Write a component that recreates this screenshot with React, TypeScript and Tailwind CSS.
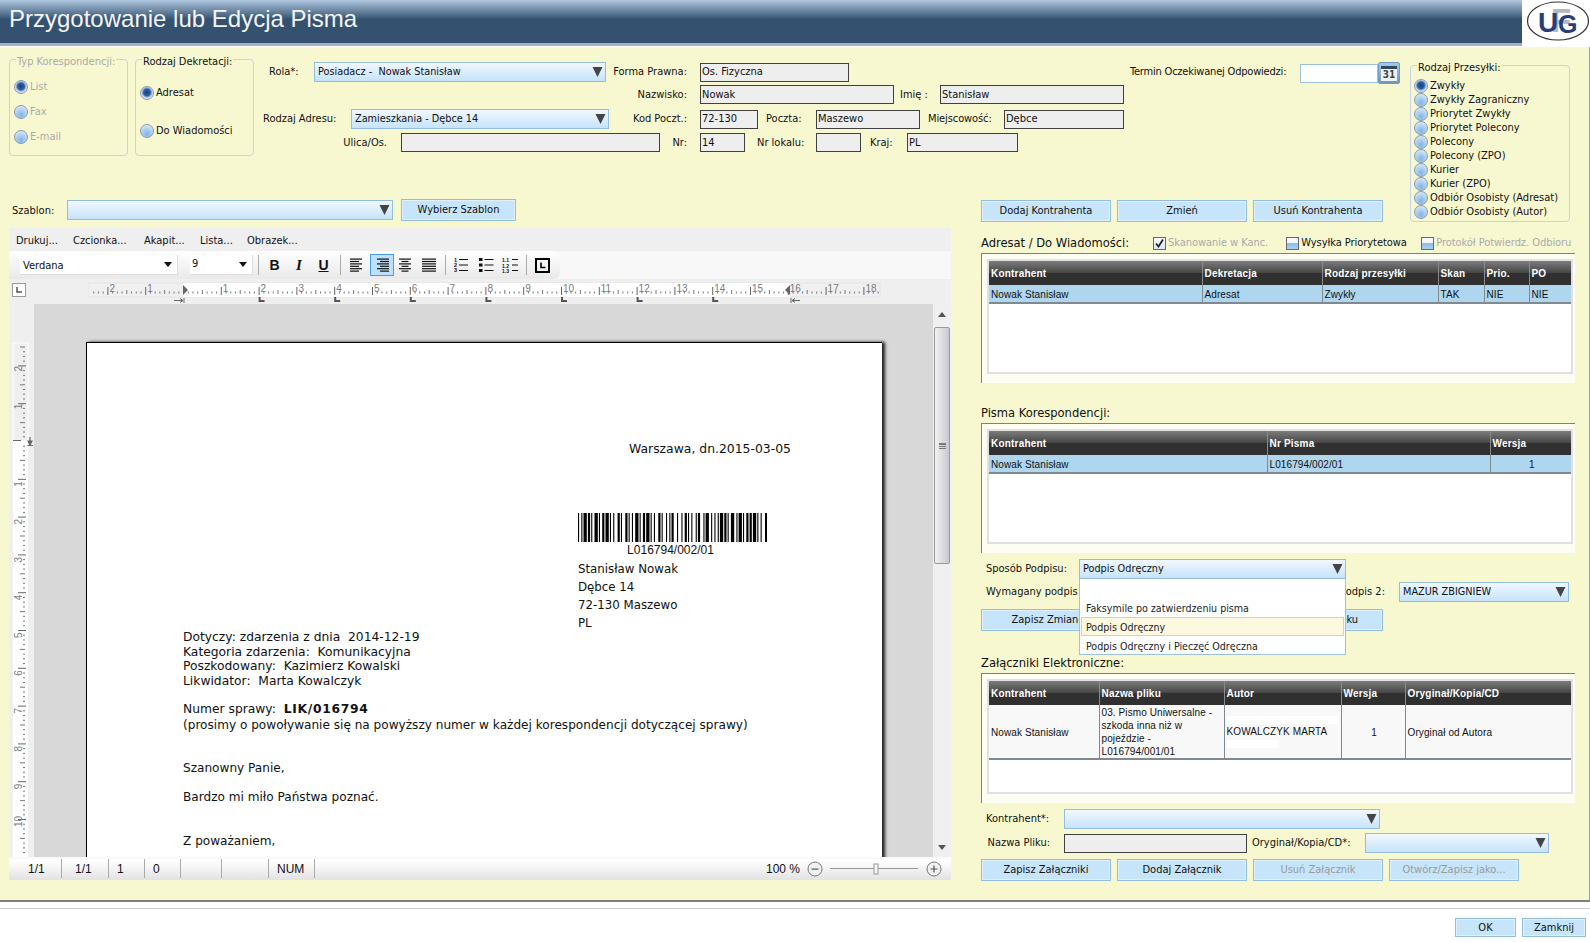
import React from 'react';

const arrowDown = (
  <svg width="11" height="12" viewBox="0 0 11 12" className="shrink-0">
    <polygon points="0.5,1 10.5,1 5.5,11" fill="#444" />
  </svg>
);

function Radio({ checked, disabled, label }: { checked?: boolean; disabled?: boolean; label: string }) {
  return (
    <div className={`flex items-center h-[14px] gap-[2px] text-[11px] whitespace-nowrap ${disabled ? 'text-[#aaaaaa]' : 'text-[#111]'}`}>
      <span
        className={`w-[14px] h-[14px] rounded-full border border-[#8a9aa8] shrink-0 flex items-center justify-center ${
          checked
            ? 'bg-[radial-gradient(circle_at_50%_45%,#1c3f78_0%,#2f5fa8_38%,#c9ddf2_62%,#e8f0f8_100%)]'
            : 'bg-[radial-gradient(circle_at_50%_75%,#7fb4e8_0%,#b8d6f2_55%,#e8f2fa_100%)]'
        }`}
      />
      <span className="pt-[1px]">{label}</span>
    </div>
  );
}

function Group({ legend, disabled, className, children }: { legend: string; disabled?: boolean; className: string; children: React.ReactNode }) {
  return (
    <div className={`relative border border-[#c4d4e4] rounded-[4px] shrink-0 ${className}`}>
      <span className={`absolute -top-[5px] left-[6px] px-[1px] text-[11px] leading-[14px] bg-[#f8f8d0] whitespace-nowrap ${disabled ? 'text-[#aaaaaa]' : 'text-[#111]'}`}>
        {legend}
      </span>
      {children}
    </div>
  );
}

function Select({ value, className }: { value?: string; className: string }) {
  return (
    <div className={`h-[20px] border border-[#94bcdc] bg-[linear-gradient(#f0f8ff,#c6e3fa)] flex items-center justify-between pl-[3px] pr-[2px] text-[10.8px] text-[#111] shrink-0 ${className}`}>
      <span className="whitespace-pre pt-[1px]">{value}</span>
      {arrowDown}
    </div>
  );
}

function Field({ value, className }: { value?: string; className: string }) {
  return (
    <div className={`h-[19px] border border-[#404040] bg-[#eeeeee] flex items-center pl-[1px] pt-[1px] text-[11px] text-[#111] shrink-0 whitespace-nowrap ${className}`}>
      {value}
    </div>
  );
}

function Btn({ label, disabled, className }: { label?: string; disabled?: boolean; className?: string }) {
  return (
    <button className={`h-[22px] border border-[#94bcdc] shadow-[inset_0_0_0_1px_#dff0fc] bg-[#c6e5fa] text-[11px] pt-[1px] shrink-0 whitespace-nowrap ${disabled ? 'text-[#9a9a9a]' : 'text-[#111]'} ${className ?? 'w-[130px]'}`}>
      {label}
    </button>
  );
}

function Lbl({ text, className }: { text: string; className: string }) {
  return <div className={`text-[11px] text-[#111] pt-[1px] shrink-0 whitespace-nowrap ${className}`}>{text}</div>;
}

function Check({ checked, blue, label, disabled }: { checked?: boolean; blue?: boolean; label: string; disabled?: boolean }) {
  return (
    <div className={`flex items-center gap-[2px] text-[11px] tracking-[-0.05px] whitespace-nowrap ${disabled ? 'text-[#aaaaaa]' : 'text-[#111]'}`}>
      <span className={`w-[13px] h-[13px] border border-[#667] shrink-0 flex items-center justify-center ${blue ? 'bg-[linear-gradient(#f4f8fc_45%,#8dbde8_50%,#a8d0f0)]' : 'bg-[linear-gradient(#ffffff,#d6e6f4)]'}`}>
        {checked && (
          <svg width="11" height="11" viewBox="0 0 11 11">
            <path d="M2 5.5 L4.5 8.5 L9 1.5" stroke="#223" strokeWidth="1.8" fill="none" />
          </svg>
        )}
      </span>
      <span>{label}</span>
    </div>
  );
}

const thCls = "h-[24px] border-r border-[#8a8a8a] last:border-r-0 bg-[linear-gradient(#7c7c7c,#454545_50%,#303030_50%)] text-white text-[10px] font-bold text-left pl-[2px] pt-[1px] tracking-[0.2px] font-['Liberation_Sans',sans-serif]";
const tdCls = "border-r border-b-2 border-b-[#808890] border-r-[#808890] last:border-r-0 text-[10px] text-[#111] pl-[2px] pt-[1px] tracking-[0.1px] align-middle font-['Liberation_Sans',sans-serif]";

function Panel({ children }: { children: React.ReactNode }) {
  return (
    <div className="h-[130px] border-t border-l border-[#808080] bg-[#fdfdf4] pt-[5px] pl-[5px] w-[594px]">
      <div className="w-[586px] h-[115px] border-2 border-[#e0e0e0] bg-white">{children}</div>
    </div>
  );
}

// horizontal ruler: 88..880 of the page, origin at 183
function HRuler() {
  const cm = 37.8;
  const ox = 95;
  const ticks: React.ReactNode[] = [];
  for (let i = -20; i < 150; i++) {
    const x = ox + (i * cm) / 8;
    if (x < 1 || x > 791) continue;
    if (i % 8 === 0) continue;
    ticks.push(<rect key={i} x={x} y={i % 4 === 0 ? 11 : 12.5} width="1" height={i % 4 === 0 ? 4 : 2} fill="#777" />);
  }
  const nums = [-2, -1, 1, 2, 3, 4, 5, 6, 7, 8, 9, 10, 11, 12, 13, 14, 15, 16, 17, 18];
  const stops = [2, 4, 6, 8, 10, 12, 14];
  return (
    <svg width="800" height="25" viewBox="0 0 800 25" className="shrink-0">
      <rect x="0" y="4" width="792" height="14" fill="#f0f0f0" stroke="#e4e4e4" />
      <rect x="95" y="4" width="607" height="14" fill="#ffffff" />
      {ticks}
      {nums.map((n) => (
        <g key={n}>
          <rect x={ox + n * cm} y="8" width="1" height="8" fill="#666" />
          <text x={ox + n * cm + 2} y="12.5" fontSize="10" fontFamily="Liberation Sans, sans-serif" fill="#7a7a80">
            {Math.abs(n)}
          </text>
        </g>
      ))}
      {stops.map((n) => (
        <path key={n} d={`M${ox + n * cm + 1} 18 V22 H${ox + n * cm + 6}`} stroke="#555" strokeWidth="2" fill="none" />
      ))}
      <polygon points="95,6 100,11 95,16" fill="#666" />
      <path d="M86 21.5 H95 M92 19.5 L95 21.5 L92 23.5 M96 19 V24" stroke="#666" strokeWidth="1" fill="none" />
      <polygon points="702,6 697,11 702,16" fill="#666" />
      <path d="M703 19 V24 M704 21.5 H712 M707 19.5 L704 21.5 L707 23.5" stroke="#666" strokeWidth="1" fill="none" />
    </svg>
  );
}

// vertical ruler: column 9..34, starts at y 304, origin at y 441
function VRuler() {
  const cm = 37.8;
  const oy = 137;
  const ticks: React.ReactNode[] = [];
  for (let i = -20; i < 100; i++) {
    const y = oy + (i * cm) / 8;
    if (y < 40 || y > 553) continue;
    if (i % 8 === 0) continue;
    ticks.push(<rect key={i} x={i % 4 === 0 ? 11 : 14} y={y} width={i % 4 === 0 ? 5 : 2} height="1" fill="#777" />);
  }
  const nums = [-2, -1, 1, 2, 3, 4, 5, 6, 7, 8, 9, 10];
  return (
    <svg width="25" height="553" viewBox="0 0 25 553" className="shrink-0">
      <rect x="4" y="39" width="15" height="514" fill="#ffffff" />
      <rect x="4" y="39" width="15" height="98" fill="#efefef" stroke="#ffffff" />
      {ticks}
      {nums.map((n) => {
        const y = oy + n * cm;
        return (
          <g key={n}>
            <rect x="9" y={y} width="8" height="1" fill="#666" />
            <text
              x="0"
              y="0"
              fontSize="10"
              fontFamily="Liberation Sans, sans-serif"
              fill="#7a7a80"
              transform={`translate(12.5 ${y + (n < 0 ? 6 : 8)}) rotate(-90)`}
            >
              {Math.abs(n)}
            </text>
          </g>
        );
      })}
      <rect x="4" y="136" width="8" height="1" fill="#666" />
      <path d="M21 133 V140 M19 137 L21 141 L23 137 Z M18.5 141.5 H24" stroke="#666" strokeWidth="1.2" fill="#666" />
    </svg>
  );
}

const barPattern = '1211312112311221311213211321121231122131121321131211231312211213112311321212113121123211311221213112132113122112311213211231';

function Barcode() {
  let x = 0;
  const bars: React.ReactNode[] = [];
  for (let i = 0; i < barPattern.length && x < 189; i++) {
    const w = Number(barPattern[i]) * 1.1;
    if (i % 2 === 0) bars.push(<rect key={i} x={x} y="0" width={Math.min(w, 189 - x)} height="29" fill="#000" />);
    x += w;
  }
  return (
    <svg width="189" height="29" viewBox="0 0 189 29" className="block">
      {bars}
    </svg>
  );
}

function AlignIcon({ widths, right, center }: { widths: number[]; right?: boolean; center?: boolean }) {
  return (
    <svg width="16" height="16" viewBox="0 0 16 16" className="shrink-0">
      {widths.map((w, i) => (
        <rect key={i} x={right ? 15 - w : center ? 8 - w / 2 : 1} y={1.5 + i * 2.4} width={w} height="1.2" fill="#111" />
      ))}
    </svg>
  );
}

function Toolbar() {
  return (
    <div className="h-[28px] bg-[#f8f8f8] flex">
      <div className="w-[551px] h-[28px] rounded-r-[6px] bg-[linear-gradient(#ffffff,#e9e9e9)] flex items-center pl-[11px]">
        <div className="w-[158px] h-[20px] bg-white border-r border-b border-[#ddd] flex items-center justify-between pl-[3px] pr-[5px] text-[11px] text-[#111] shrink-0">
          <span className="pt-[3px]">Verdana</span>
          <svg width="8" height="5" viewBox="0 0 8 5"><polygon points="0,0 8,0 4,5" fill="#111" /></svg>
        </div>
        <div className="ml-[12px] w-[63px] h-[20px] bg-white border-r border-b border-[#ddd] flex items-center justify-between pl-[2px] pr-[5px] text-[11px] text-[#111] shrink-0">
          <span>9</span>
          <svg width="8" height="5" viewBox="0 0 8 5"><polygon points="0,0 8,0 4,5" fill="#111" /></svg>
        </div>
        <div className="ml-[5px] w-px h-[20px] bg-[#aaa]" />
        <div className="w-[31px] text-center ml-[0px] font-['Liberation_Sans',sans-serif] font-bold text-[14px] text-[#111]">B</div>
        <div className="w-[18px] text-center font-['Liberation_Serif',serif] font-bold italic text-[15px] text-[#111]">I</div>
        <div className="w-[31px] text-center font-['Liberation_Sans',sans-serif] font-bold underline text-[14px] text-[#111]">U</div>
        <div className="ml-[1px] w-px h-[20px] bg-[#aaa]" />
        <div className="ml-[8px] shrink-0"><AlignIcon widths={[12, 9, 12, 9, 12, 9]} /></div>
        <div className="ml-[5px] w-[24px] h-[22px] border border-[#4a9cf0] bg-[#bfe0fa] flex items-center justify-center shrink-0">
          <AlignIcon widths={[12, 9, 12, 9, 12, 9]} right />
        </div>
        <div className="ml-[3px] shrink-0"><AlignIcon widths={[12, 7, 12, 7, 12, 7]} center /></div>
        <div className="ml-[8px] shrink-0"><AlignIcon widths={[14, 14, 14, 14, 14, 14]} /></div>
        <div className="ml-[8px] w-px h-[20px] bg-[#aaa]" />
        <svg width="16" height="16" viewBox="0 0 16 16" className="ml-[7px] shrink-0">
          <text x="1" y="5" fontSize="5.5" fontWeight="bold" fontFamily="Liberation Sans, sans-serif" fill="#111">1</text>
          <text x="1" y="10" fontSize="5.5" fontWeight="bold" fontFamily="Liberation Sans, sans-serif" fill="#111">2</text>
          <text x="1" y="15" fontSize="5.5" fontWeight="bold" fontFamily="Liberation Sans, sans-serif" fill="#111">3</text>
          <rect x="6" y="2" width="9" height="1" fill="#111" /><rect x="6" y="7.5" width="9" height="1" fill="#111" /><rect x="6" y="13" width="9" height="1" fill="#111" />
        </svg>
        <svg width="16" height="16" viewBox="0 0 16 16" className="ml-[9px] shrink-0">
          <rect x="1" y="1" width="3.5" height="3" fill="#111" /><rect x="1" y="6.5" width="3.5" height="3" fill="#111" /><rect x="1" y="12" width="3.5" height="3" fill="#111" />
          <rect x="6.5" y="2" width="9" height="1" fill="#111" /><rect x="6.5" y="7.5" width="9" height="1" fill="#111" /><rect x="6.5" y="13" width="9" height="1" fill="#111" />
        </svg>
        <svg width="16" height="16" viewBox="0 0 16 16" className="ml-[8px] shrink-0">
          <text x="0" y="5" fontSize="5" fontWeight="bold" fontFamily="Liberation Sans, sans-serif" fill="#111">1.1</text>
          <text x="0" y="10.5" fontSize="5" fontWeight="bold" fontFamily="Liberation Sans, sans-serif" fill="#111">1.2</text>
          <text x="0" y="16" fontSize="5" fontWeight="bold" fontFamily="Liberation Sans, sans-serif" fill="#111">1.3</text>
          <rect x="10" y="2" width="6" height="1" fill="#111" /><rect x="10" y="7.5" width="6" height="1" fill="#111" /><rect x="10" y="13" width="6" height="1" fill="#111" />
        </svg>
        <div className="ml-[8px] w-px h-[20px] bg-[#aaa]" />
        <div className="ml-[8px] w-[15px] h-[15px] border-2 border-black flex items-center justify-center shrink-0">
          <svg width="7" height="7" viewBox="0 0 7 7"><path d="M2 0.5 V5.5 H6.5" stroke="#000" strokeWidth="1.6" fill="none" /></svg>
        </div>
      </div>
    </div>
  );
}

function StatusCell({ text, className }: { text?: string; className: string }) {
  return <div className={`h-[19px] border-r border-[#aaa] text-[12px] text-[#111] flex items-center shrink-0 font-['Liberation_Sans',sans-serif] ${className}`}>{text}</div>;
}

function Editor() {
  return (
    <div className="w-[942px] h-[652px] shrink-0 flex flex-col">
      <div className="h-[23px] bg-[#efefef] flex items-center pt-[3px] text-[11px] text-[#111]">
        <span className="ml-[7px] w-[57px]">Drukuj...</span>
        <span className="w-[71px]">Czcionka...</span>
        <span className="w-[56px]">Akapit...</span>
        <span className="w-[47px]">Lista...</span>
        <span>Obrazek...</span>
      </div>
      <Toolbar />
      <div className="h-[25px] bg-[#efefef] flex items-start">
        <div className="ml-[3px] mt-[4px] w-[14px] h-[14px] border border-[#999] bg-white flex items-center justify-center shrink-0">
          <svg width="8" height="8" viewBox="0 0 8 8"><path d="M2 1 V6 H7" stroke="#555" strokeWidth="1.5" fill="none" /></svg>
        </div>
        <div className="ml-[62px]"><HRuler /></div>
      </div>
      <div className="h-[553px] flex bg-[#efefef]">
        <VRuler />
        <div className="w-[899px] h-[553px] bg-[#d8d8d8] overflow-hidden pt-[38px] pl-[52px] shrink-0">
          <div className="w-[796px] h-[700px] bg-white border-t border-l border-black shadow-[3px_0_3px_#222] font-['DejaVu_Sans',sans-serif] text-[12px] text-[#111]">
            <div className="pl-[542px] pt-[98px] leading-[16px] text-[12.4px]">Warszawa, dn.2015-03-05</div>
            <div className="pl-[491px] pt-[56px] w-[700px]">
              <Barcode />
              <div className="w-[189px] text-center font-['Liberation_Sans',sans-serif] leading-[14px] mt-[1px] -ml-[2px]">L016794/002/01</div>
              <div className="leading-[18px] mt-[3px] text-[11.8px]">
                <div>Stanisław Nowak</div>
                <div>Dębce 14</div>
                <div>72-130 Maszewo</div>
                <div>PL</div>
              </div>
            </div>
            <div className="pl-[96px] -mt-[2px] leading-[14.5px] whitespace-pre text-[12.3px]">
              <div>Dotyczy: zdarzenia z dnia  2014-12-19</div>
              <div>Kategoria zdarzenia:  Komunikacyjna</div>
              <div>Poszkodowany:  Kazimierz Kowalski</div>
              <div>Likwidator:  Marta Kowalczyk</div>
              <div className="mt-[14px]">Numer sprawy:  <span className="font-bold tracking-[0.7px]">LIK/016794</span></div>
              <div className="mt-[1px] text-[12.1px]">(prosimy o powoływanie się na powyższy numer w każdej korespondencji dotyczącej sprawy)</div>
              <div className="mt-[29px] text-[12.1px]">Szanowny Panie,</div>
              <div className="mt-[14px] text-[12.1px]">Bardzo mi miło Państwa poznać.</div>
              <div className="mt-[30px] text-[12.1px]">Z poważaniem,</div>
            </div>
          </div>
        </div>
        <div className="w-[18px] h-[553px] bg-[#f0f0f0] flex flex-col items-center shrink-0">
          <svg width="8" height="5" viewBox="0 0 8 5" className="mt-[8px] shrink-0"><polygon points="0,5 8,5 4,0" fill="#555" /></svg>
          <div className="mt-[10px] w-[16px] h-[237px] rounded-[2px] border border-[#9a9a9a] bg-[linear-gradient(90deg,#f2f2f2,#c8c8d0)] flex items-center justify-center shrink-0">
            <div className="w-[7px] h-[6px] border-y border-[#777] bg-[linear-gradient(#777_1px,transparent_1px)] bg-[length:100%_2px]" />
          </div>
          <div className="flex-1" />
          <svg width="8" height="5" viewBox="0 0 8 5" className="mb-[7px] shrink-0"><polygon points="0,0 8,0 4,5" fill="#555" /></svg>
        </div>
      </div>
      <div className="h-[23px] bg-[linear-gradient(#f8f8f8,#ffffff_15%,#e2e2e2)] flex items-center">
        <StatusCell text="1/1" className="w-[53px] pl-[19px]" />
        <StatusCell text="1/1" className="w-[47px] pl-[13px]" />
        <StatusCell text="1" className="w-[36px] pl-[8px]" />
        <StatusCell text="0" className="w-[36px] pl-[8px]" />
        <StatusCell className="w-[41px]" />
        <StatusCell className="w-[47px]" />
        <StatusCell text="NUM" className="w-[46px] pl-[8px]" />
        <div className="flex-1" />
        <span className="text-[12px] text-[#111] font-['Liberation_Sans',sans-serif]">100 %</span>
        <svg width="16" height="16" viewBox="0 0 16 16" className="ml-[7px] shrink-0">
          <circle cx="8" cy="8" r="7" fill="#f0f0f0" stroke="#777" /><rect x="4.5" y="7.5" width="7" height="1.2" fill="#555" />
        </svg>
        <svg width="88" height="16" viewBox="0 0 88 16" className="ml-[7px] shrink-0">
          <rect x="0" y="7" width="88" height="1" fill="#999" /><rect x="44" y="3" width="4" height="10" fill="#f4f4f4" stroke="#999" />
        </svg>
        <svg width="16" height="16" viewBox="0 0 16 16" className="ml-[8px] mr-[9px] shrink-0">
          <circle cx="8" cy="8" r="7" fill="#f0f0f0" stroke="#777" /><path d="M4.5 8 H11.5 M8 4.5 V11.5" stroke="#555" strokeWidth="1.2" />
        </svg>
      </div>
    </div>
  );
}

function TopForm() {
  return (
    <div className="ml-[9px] pt-[3px] flex flex-col">
      <div className="flex items-center h-[20px]">
        <Lbl text="Rola*:" className="w-[51px] pl-[6px]" />
        <Select value="Posiadacz -  Nowak Stanisław" className="w-[292px]" />
        <Lbl text="Forma Prawna:" className="w-[94px] text-right pr-[13px]" />
        <Field value="Os. Fizyczna" className="w-[149px]" />
        <Lbl text="Termin Oczekiwanej Odpowiedzi:" className="w-[170px] ml-[281px] tracking-[-0.2px]" />
        <div className="w-[78px] h-[19px] border border-[#9cc2e0] bg-white shrink-0 mt-[2px]" />
        <div className="w-[22px] h-[22px] rounded-[2px] border border-[#6f9cc0] bg-[linear-gradient(#a8c8e0,#6e98ba)] flex items-center justify-center shrink-0 mt-[2px]">
          <div className="w-[16px] h-[15px] border-t-[3px] border-[#2c4a68] bg-[#f0f0f0] text-[10px] font-bold leading-[12px] text-center text-[#444]">31</div>
        </div>
      </div>
      <div className="flex items-center h-[19px] mt-[3px]">
        <Lbl text="Nazwisko:" className="w-[437px] text-right pr-[13px]" />
        <Field value="Nowak" className="w-[194px]" />
        <Lbl text="Imię :" className="w-[46px] pl-[6px]" />
        <Field value="Stanisław" className="w-[184px]" />
      </div>
      <div className="flex items-center h-[20px] mt-[5px]">
        <Lbl text="Rodzaj Adresu:" className="w-[88px]" />
        <Select value="Zamieszkania - Dębce 14" className="w-[258px]" />
        <Lbl text="Kod Poczt.:" className="w-[91px] text-right pr-[13px]" />
        <Field value="72-130" className="w-[58px]" />
        <Lbl text="Poczta:" className="w-[58px] pl-[8px]" />
        <Field value="Maszewo" className="w-[104px]" />
        <Lbl text="Miejscowość:" className="w-[84px] pl-[8px] tracking-[-0.1px]" />
        <Field value="Dębce" className="w-[120px]" />
      </div>
      <div className="flex items-center h-[19px] mt-[4px]">
        <Lbl text="Ulica/Os." className="w-[138px] text-right pr-[14px]" />
        <Field className="w-[259px]" />
        <Lbl text="Nr:" className="w-[40px] text-right pr-[13px]" />
        <Field value="14" className="w-[45px]" />
        <Lbl text="Nr lokalu:" className="w-[71px] pl-[12px]" />
        <Field className="w-[45px]" />
        <Lbl text="Kraj:" className="w-[46px] pl-[9px]" />
        <Field value="PL" className="w-[111px]" />
      </div>
    </div>
  );
}

function RightColumn() {
  return (
    <div className="ml-[30px] pt-[5px] w-[594px] shrink-0 flex flex-col">
      <div className="h-[20px] flex items-center">
        <div className="text-[12.8px] text-[#111] w-[172px] shrink-0">Adresat / Do Wiadomości:</div>
        <Check checked label="Skanowanie w Kanc." disabled />
        <div className="w-[132px] ml-[18px] shrink-0"><Check blue label="Wysyłka Priorytetowa" /></div>
        <div className="ml-[3px]"><Check blue label="Protokół Potwierdz. Odbioru" disabled /></div>
      </div>
      <Panel>
        <table className="w-full table-fixed">
          <colgroup><col className="w-[213px]" /><col className="w-[120px]" /><col className="w-[116px]" /><col className="w-[46px]" /><col className="w-[45px]" /><col /></colgroup>
          <thead>
            <tr>
              <th className={thCls}>Kontrahent</th><th className={thCls}>Dekretacja</th><th className={thCls}>Rodzaj przesyłki</th><th className={thCls}>Skan</th><th className={thCls}>Prio.</th><th className={thCls}>PO</th>
            </tr>
          </thead>
          <tbody>
            <tr className="h-[18px] bg-[#aed6ee]">
              <td className={tdCls}>Nowak Stanisław</td><td className={tdCls}>Adresat</td><td className={tdCls}>Zwykły</td><td className={tdCls}>TAK</td><td className={tdCls}>NIE</td><td className={tdCls}>NIE</td>
            </tr>
          </tbody>
        </table>
      </Panel>
      <div className="mt-[20px] h-[20px] flex items-center text-[12.8px] text-[#111]">Pisma Korespondencji:</div>
      <Panel>
        <table className="w-full table-fixed">
          <colgroup><col className="w-[278px]" /><col className="w-[223px]" /><col /></colgroup>
          <thead>
            <tr>
              <th className={thCls}>Kontrahent</th><th className={thCls}>Nr Pisma</th><th className={thCls}>Wersja</th>
            </tr>
          </thead>
          <tbody>
            <tr className="h-[18px] bg-[#aed6ee]">
              <td className={tdCls}>Nowak Stanisław</td><td className={tdCls}>L016794/002/01</td><td className={`${tdCls} text-center`}>1</td>
            </tr>
          </tbody>
        </table>
      </Panel>
      <div className="mt-[6px] h-[20px] flex items-center">
        <Lbl text="Sposób Podpisu:" className="w-[98px] pl-[5px]" />
        <div className="relative shrink-0">
          <Select value="Podpis Odręczny" className="w-[267px]" />
          <div className="absolute z-10 top-[20px] left-0 w-[267px] h-[76px] bg-white border border-t-0 border-[#9cc2e0] px-[1px] text-[10.6px] text-[#222]">
            <div className="h-[19px] mt-[19px] pt-[2px] flex items-center pl-[5px]">Faksymile po zatwierdzeniu pisma</div>
            <div className="h-[19px] pt-[2px] flex items-center pl-[4px] bg-[#fdf9e0] border border-[#f5cc7a]">Podpis Odręczny</div>
            <div className="h-[19px] pt-[2px] flex items-center pl-[5px]">Podpis Odręczny i Pieczęć Odręczna</div>
          </div>
        </div>
      </div>
      <div className="mt-[3px] h-[20px] flex items-center">
        <Lbl text="Wymagany podpis" className="w-[98px] pl-[5px]" />
        <Select className="w-[267px]" />
        <Lbl text="Podpis 2:" className="w-[53px] flex justify-end pr-[14px]" />
        <Select value="MAZUR ZBIGNIEW" className="w-[170px]" />
      </div>
      <div className="mt-[7px] flex gap-[6px]">
        <Btn label="Zapisz Zmianę" className="w-[130px] pl-[4px]" />
        <Btn />
        <Btn label="Podgląd Wydruku" className="w-[130px] pr-[6px]" />
      </div>
      <div className="mt-[22px] h-[20px] flex items-center text-[12.8px] text-[#111]">Załączniki Elektroniczne:</div>
      <Panel>
        <table className="w-full table-fixed">
          <colgroup><col className="w-[110px]" /><col className="w-[125px]" /><col className="w-[117px]" /><col className="w-[64px]" /><col /></colgroup>
          <thead>
            <tr>
              <th className={thCls}>Kontrahent</th><th className={thCls}>Nazwa pliku</th><th className={thCls}>Autor</th><th className={thCls}>Wersja</th><th className={thCls}>Oryginał/Kopia/CD</th>
            </tr>
          </thead>
          <tbody>
            <tr className="h-[54px] bg-[#f8f8f8]">
              <td className={tdCls}>Nowak Stanisław</td>
              <td className={`${tdCls} leading-[13px]`}>03. Pismo Uniwersalne - szkoda inna niż w pojeździe - L016794/001/01</td>
              <td className={tdCls}>
                <div className="h-[8px] bg-white mr-[3px]" />
                <div className="leading-[16px]">KOWALCZYK MARTA</div>
                <div className="h-[8px] w-[51px] bg-white" />
              </td>
              <td className={`${tdCls} text-center`}>1</td>
              <td className={tdCls}>Oryginał od Autora</td>
            </tr>
          </tbody>
        </table>
      </Panel>
      <div className="mt-[6px] h-[20px] flex items-center">
        <Lbl text="Kontrahent*:" className="w-[83px] pl-[5px]" />
        <Select className="w-[316px]" />
      </div>
      <div className="mt-[4px] h-[20px] flex items-center">
        <Lbl text="Nazwa Pliku:" className="w-[83px] text-right pr-[14px]" />
        <Field className="w-[183px]" />
        <Lbl text="Oryginał/Kopia/CD*:" className="w-[118px] pl-[5px]" />
        <Select className="w-[184px]" />
      </div>
      <div className="mt-[6px] flex gap-[6px]">
        <Btn label="Zapisz Załączniki" />
        <Btn label="Dodaj Załącznik" />
        <Btn label="Usuń Załącznik" disabled />
        <Btn label="Otwórz/Zapisz jako..." disabled />
      </div>
    </div>
  );
}

export default function App() {
  const radios = ['Zwykły Zagraniczny', 'Priorytet Zwykły', 'Priorytet Polecony', 'Polecony', 'Polecony (ZPO)', 'Kurier', 'Kurier (ZPO)', 'Odbiór Osobisty (Adresat)', 'Odbiór Osobisty (Autor)'];
  return (
    <div className="w-[1590px] h-[942px] overflow-hidden bg-white flex flex-col font-['DejaVu_Sans_Condensed','Liberation_Sans',sans-serif]">
      {/* Title bar */}
      <div className="h-[47px] flex shrink-0">
        <div className="w-[1522px] h-[46px] border-b-[3px] border-b-[#a8b0b8]">
          <div className="h-[43px] bg-[linear-gradient(#afc7e0,#34526f_45%,#34526f)] pl-[9px] pb-[5px] flex items-center text-[24px] text-[#f4f4f4] font-['Liberation_Sans',sans-serif]">
            Przygotowanie lub Edycja Pisma
          </div>
        </div>
        <div className="w-[68px] h-[47px] bg-white shrink-0">
          <svg width="68" height="44" viewBox="0 0 68 44" className="block">
            <ellipse cx="36" cy="21" rx="30.5" ry="19" fill="#fff" stroke="#333" strokeWidth="1.2" />
            <text x="29" y="32" fontSize="33" fontWeight="bold" fontFamily="Liberation Sans, sans-serif" fill="#b4b8c0">F</text>
            <text x="16" y="32" fontSize="28" fontWeight="bold" fontFamily="Liberation Sans, sans-serif" fill="#263f78">U</text>
            <text x="36" y="33" fontSize="25" fontWeight="bold" fontFamily="Liberation Sans, sans-serif" fill="#263f78">G</text>
          </svg>
        </div>
      </div>

      <div className="h-[855px] shrink-0 bg-[#f8f8d0] border-b-2 border-b-[#808080] border-r border-r-[#a0a0a0] pl-[9px] overflow-hidden">
        <div className="flex h-[181px]">
          <div className="w-[1391px] shrink-0 pt-[12px]">
            <div className="flex h-[141px] items-start">
              <Group legend="Typ Korespondencji:" disabled className="w-[119px] h-[97px] pt-[20px] pl-[4px]">
                <div className="flex flex-col gap-[11px]">
                  <Radio checked disabled label="List" />
                  <Radio disabled label="Fax" />
                  <Radio disabled label="E-mail" />
                </div>
              </Group>
              <Group legend="Rodzaj Dekretacji:" className="ml-[7px] w-[119px] h-[97px] pt-[26px] pl-[4px]">
                <div className="flex flex-col gap-[24px]">
                  <Radio checked label="Adresat" />
                  <Radio label="Do Wiadomości" />
                </div>
              </Group>
              <TopForm />
            </div>
            <div className="flex items-start h-[22px]">
              <Lbl text="Szablon:" className="w-[58px] pl-[3px] mt-[2px]" />
              <Select className="w-[326px]" />
              <div className="ml-[8px] -mt-[1px] flex"><Btn label="Wybierz Szablon" className="w-[115px]" /></div>
              <div className="ml-[465px] flex gap-[6px]">
                <Btn label="Dodaj Kontrahenta" />
                <Btn label="Zmień" />
                <Btn label="Usuń Kontrahenta" />
              </div>
            </div>
          </div>
          <div className="ml-[10px] mt-[18px]">
            <Group legend="Rodzaj Przesyłki:" className="w-[160px] h-[157px] pt-[13px] pl-[3px]">
              <Radio checked label="Zwykły" />
              {radios.map((r) => (
                <Radio key={r} label={r} />
              ))}
            </Group>
          </div>
        </div>
        <div className="flex">
          <Editor />
          <RightColumn />
        </div>
      </div>

      <div className="flex-1 bg-white">
        <div className="mt-[6px] border-t border-[#cccccc] pt-[9px] pr-[4px] flex justify-end gap-[6px]">
          <Btn label="OK" className="w-[61px] !h-[19px]" />
          <Btn label="Zamknij" className="w-[64px] !h-[19px]" />
        </div>
      </div>
    </div>
  );
}
